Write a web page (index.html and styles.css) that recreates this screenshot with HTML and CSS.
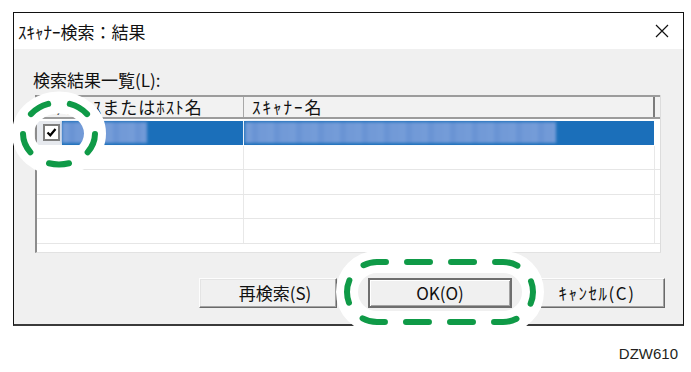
FILE: index.html
```html
<!DOCTYPE html>
<html lang="ja">
<head>
<meta charset="utf-8">
<title>ｽｷｬﾅｰ検索：結果</title>
<link rel="stylesheet" href="styles.css">
</head>
<body>
<div class="stage">
  <div class="dialog">
    <div class="titlebar">
      <span class="title">ｽｷｬﾅｰ検索：結果</span>
      <svg class="close" width="14" height="14" viewBox="0 0 14 14"><path d="M1 1L13 13M13 1L1 13" stroke="#111" stroke-width="1.2" fill="none"/></svg>
    </div>
    <div class="content">
      <div class="label">検索結果一覧(L):</div>
      <div class="listbox">
        <div class="lv-header">
          <div class="hcell c1">IPｱﾄﾞﾚｽまたはﾎｽﾄ名</div>
          <div class="hcell c2">ｽｷｬﾅｰ名</div>
          <div class="hcell c3"></div>
        </div>
        <div class="rows">
          <div class="row selected">
            <div class="cell c1">
              <span class="checkcell"><span class="check"><svg width="11" height="11" viewBox="0 0 11 11"><path d="M1.5 5.5L4.3 8.3L9.5 2" stroke="#000" stroke-width="2.2" fill="none"/></svg></span></span>
              <span class="blur b1"></span>
            </div>
            <div class="cell c2"><span class="blur b2"></span></div>
            <div class="cell c3"></div>
          </div>
          <div class="row"><div class="cell c1"></div><div class="cell c2"></div><div class="cell c3"></div></div>
          <div class="row"><div class="cell c1"></div><div class="cell c2"></div><div class="cell c3"></div></div>
          <div class="row"><div class="cell c1"></div><div class="cell c2"></div><div class="cell c3"></div></div>
          <div class="row"><div class="cell c1"></div><div class="cell c2"></div><div class="cell c3"></div></div>
        </div>
      </div>
      <div class="buttons">
        <button class="btn btn-search">再検索(S)</button>
        <button class="btn btn-ok">OK(O)</button>
        <button class="btn btn-cancel">ｷｬﾝｾﾙ(C)</button>
      </div>
    </div>
  </div>
  <div class="figure-id">DZW610</div>
  <svg class="callouts" width="691" height="372" viewBox="0 0 691 372">
    <ellipse class="halo" cx="59" cy="133.5" rx="36" ry="31"/>
    <ellipse class="ring" cx="59" cy="133.5" rx="36" ry="31" pathLength="100" stroke-dasharray="9.6 10.4" stroke-dashoffset="-0.2"/>
    <rect class="halo" x="347" y="262" width="186" height="60" rx="30"/>
    <rect class="ring" x="347" y="262" width="186" height="60" rx="30" pathLength="100" stroke-dasharray="5.22 4.78" stroke-dashoffset="3.18"/>
  </svg>
</div>
</body>
</html>
```
FILE: styles.css
```css
html, body {
  margin: 0;
  padding: 0;
  background: #fff;
}
body {
  font-family: "Noto Sans CJK JP", "Noto Sans", sans-serif;
  color: #111;
}
.stage {
  position: relative;
  width: 691px;
  height: 372px;
  box-sizing: border-box;
  padding: 12px 0 0 13px;
  overflow: hidden;
}
.dialog {
  width: 671px;
  height: 314px;
  box-sizing: border-box;
  border: 1px solid #111;
  border-bottom: 2px solid #3a3a3a;
  display: flex;
  flex-direction: column;
}
.titlebar {
  height: 36px;
  flex: none;
  background: #fff;
  display: flex;
  align-items: center;
  justify-content: space-between;
  padding: 0 14px 0 4px;
}
.title {
  font-size: 17px;
  line-height: 20px;
  margin-top: 1px;
}
.close {
  display: block;
}
.content {
  flex: 1;
  background: #f0f0f0;
  padding: 21px 0 0 19px;
}
.label {
  font-size: 17px;
  line-height: 20px;
  height: 20px;
}
.listbox {
  margin: 5px 0 0 2px;
  width: 626px;
  height: 158px;
  box-sizing: border-box;
  background: #fff;
  border-left: 2px solid #8c8c8c;
  border-right: 1px solid #dcdcdc;
  border-bottom: 1px solid #e2e2e2;
  overflow: hidden;
}
.lv-header {
  display: flex;
  height: 24px;
  box-sizing: border-box;
  border-top: 2px solid #9c9c9c;
  border-bottom: 2px solid #9c9c9c;
  background: #f2f2f2;
}
.hcell {
  font-size: 17px;
  line-height: 20px;
  white-space: nowrap;
}
.c1 {
  width: 207px;
  flex: none;
  box-sizing: border-box;
  border-right: 1px solid #a8a8a8;
}
.c2 {
  width: 411px;
  flex: none;
  box-sizing: border-box;
  border-right: 2px solid #7c7c7c;
}
.c3 {
  flex: 1;
}
.hcell.c1 {
  padding-left: 1px;
  letter-spacing: 1px;
}
.hcell.c2 {
  padding-left: 8px;
  letter-spacing: 2px;
}
.rows {
  padding-top: 2px;
}
.row {
  display: flex;
  height: 24.5px;
  box-sizing: border-box;
  border-bottom: 1px solid #e6e6e6;
}
.row .cell.c1 {
  border-right: 1px solid #e8e8e8;
}
.row .cell.c2 {
  border-right: 1px solid #e8e8e8;
}
.row.selected {
  border-bottom-color: #fff;
}
.row.selected .cell.c1,
.row.selected .cell.c2 {
  background: #1b6fba;
  border-right-color: #fff;
  display: flex;
  align-items: stretch;
}
.checkcell {
  width: 25px;
  flex: none;
  background: #e6e9ee;
  display: flex;
  align-items: center;
  padding-left: 6px;
  box-sizing: border-box;
}
.check {
  width: 17px;
  height: 17px;
  box-sizing: border-box;
  border: 2px solid #7e7e7e;
  background: #fff;
  display: flex;
  align-items: center;
  justify-content: center;
}
.check svg {
  display: block;
}
.blur {
  display: block;
  align-self: center;
  height: 21px;
  background:
    repeating-linear-gradient(90deg, rgba(255,255,255,0.05) 0 7px, rgba(40,90,170,0.05) 7px 13px, rgba(255,255,255,0.03) 13px 22px),
    #6d97d6;
  filter: blur(1.5px);
}
.b1 {
  width: 85px;
}
.b2 {
  width: 311px;
  margin-left: 1px;
}
.buttons {
  display: flex;
  margin: 25px 0 0 166px;
}
.btn {
  height: 30px;
  box-sizing: border-box;
  font-family: "Noto Sans CJK JP", "Noto Sans", sans-serif;
  font-size: 17px;
  line-height: 20px;
  color: #111;
  background: #f0f0f0;
  border: 1px solid;
  border-color: #fdfdfd #6a6a6a #6a6a6a #fdfdfd;
  box-shadow: inset -1px -1px 0 #a3a3a3, inset 1px 1px 0 #e4e4e4;
  padding: 0;
}
.btn-search {
  width: 138px;
  padding-left: 14px;
}
.btn-ok {
  width: 144px;
  margin-left: 31px;
  border: 2px solid #6e6e6e;
  box-shadow: inset 1px 1px 0 #fff, inset -1px -1px 0 #a3a3a3;
}
.btn-cancel {
  width: 138px;
  margin-left: 15px;
  letter-spacing: 1.5px;
  padding-left: 2px;
}
.figure-id {
  margin-top: 19px;
  padding-right: 13px;
  text-align: right;
  font-family: "Liberation Sans", Arial, sans-serif;
  font-size: 15px;
  line-height: 18px;
  color: #231f20;
}
.callouts {
  position: absolute;
  left: 0;
  top: 0;
  pointer-events: none;
}
.halo {
  fill: none;
  stroke: #fff;
  stroke-width: 22;
}
.ring {
  fill: none;
  stroke: #0f9a47;
  stroke-width: 6;
  stroke-linecap: round;
}
```
